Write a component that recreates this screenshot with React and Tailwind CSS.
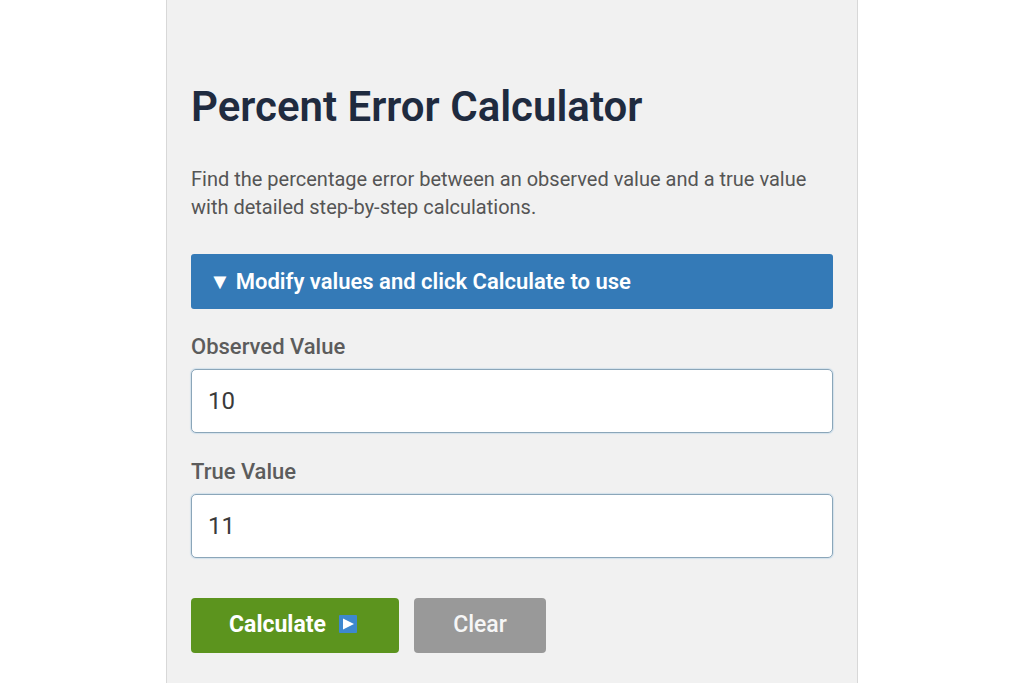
import { useState } from 'react'

const Field = ({ id, label, value, onChange }) => (
  <div>
    <label htmlFor={id} className="block text-[22px] leading-7 font-medium text-[#5c5c5c]">
      {label}
    </label>
    <input
      id={id}
      type="text"
      inputMode="decimal"
      value={value}
      onChange={(e) => onChange(e.target.value)}
      className="mt-2 block h-16 w-full rounded-[5px] border border-[#8ba6b9] bg-white px-4 text-2xl text-[#3a3a3a] shadow-[0_0_1px_1px_#d3e1ec] outline-none"
    />
  </div>
)

const PlayIcon = () => (
  <svg viewBox="0 0 18 18" className="mb-1 size-[18px]" aria-hidden="true">
    <rect width="18" height="18" rx="1" fill="#3e88cf" />
    <path d="M4 3.5l11 5.5-11 5.5z" fill="#fff" />
  </svg>
)

export default function App() {
  const [observed, setObserved] = useState('10')
  const [actual, setActual] = useState('11')
  const [result, setResult] = useState(null)

  const calculate = (e) => {
    e.preventDefault()
    const v = Number(observed)
    const t = Number(actual)
    setResult(t ? Math.abs((v - t) / t) * 100 : null)
  }

  const clear = () => {
    setObserved('')
    setActual('')
    setResult(null)
  }

  return (
    <div className="min-h-screen bg-white font-['Roboto',sans-serif]">
      <main className="mx-auto min-h-screen max-w-[692px] border-x border-[#d8d8d8] bg-[#f1f1f1] px-6 pt-20 pb-7">
        <h1 className="text-[42px] leading-[54px] font-semibold text-[#1f2b3f]">
          Percent Error Calculator
        </h1>
        <p className="mt-[31px] text-xl leading-7 text-[#555]">
          Find the percentage error between an observed value and a true value with detailed
          step-by-step calculations.
        </p>

        <form onSubmit={calculate}>
          <div className="mt-[33px] flex h-[55px] items-center gap-[5px] rounded-[3px] bg-[#347ab7] px-[18px] text-[22px] font-semibold text-white">
            <span>▼</span>
            <span>Modify values and click Calculate to use</span>
          </div>

          <div className="mt-6 flex flex-col gap-[25px]">
            <Field id="observed" label="Observed Value" value={observed} onChange={setObserved} />
            <Field id="true" label="True Value" value={actual} onChange={setActual} />
          </div>

          <div className="mt-10 flex gap-[15px]">
            <button
              type="submit"
              className="flex h-[55px] w-52 items-center justify-center gap-[13px] rounded-[4px] bg-[#5c941e] pr-1 text-[23px] font-bold text-white"
            >
              Calculate
              <PlayIcon />
            </button>
            <button
              type="button"
              onClick={clear}
              className="h-[55px] w-[132px] rounded-[4px] bg-[#999] text-[23px] font-medium text-[#f6f6f6]"
            >
              Clear
            </button>
          </div>
        </form>

        {result !== null && (
          <p className="mt-6 text-xl text-[#333]">Percent error = {result.toFixed(4)}%</p>
        )}
      </main>
    </div>
  )
}
